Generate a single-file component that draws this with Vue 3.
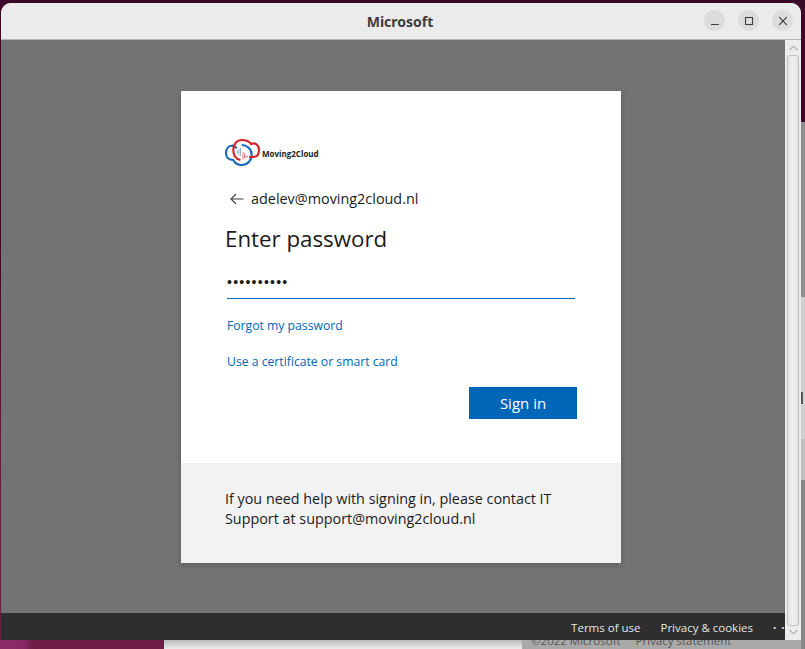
<script setup>
const footerLinks = ['Terms of use', 'Privacy & cookies']
</script>

<template>
  <div class="desktop">
    <div class="left-col">
      <div class="window">
        <header class="titlebar">
          <span class="title">Microsoft</span>
          <div class="controls">
            <button class="ctrl">
              <svg width="10" height="10" viewBox="0 0 10 10"><path d="M1 8.500h8" stroke="#3d3d3d" stroke-width="1.200" /></svg>
            </button>
            <button class="ctrl">
              <svg width="10" height="10" viewBox="0 0 10 10"><rect x="1.500" y="1.500" width="7" height="7" fill="none" stroke="#3d3d3d" stroke-width="1.100" /></svg>
            </button>
            <button class="ctrl">
              <svg width="10" height="10" viewBox="0 0 10 10"><path d="M1.200 1.200l7.600 7.600M8.800 1.200l-7.600 7.600" stroke="#3d3d3d" stroke-width="1.200" /></svg>
            </button>
          </div>
        </header>

        <div class="body">
          <main class="page">
            <div class="center">
              <section class="card">
                <div class="card-main">
                  <div class="logo">
                    <svg class="logo-mark" width="36" height="30" viewBox="0 0 36 30">
                      <path d="M11.700 11.300C10 9 8.500 8.500 6.700 8.700 3 9 1 12.500 1 16.300 1 20.500 4 23 8.300 23c1.700 3.500 4.700 5 8.400 5 5.800 0 10-4.500 10-10 0-6-4.700-10-10-10" fill="none" stroke="#1769b5" stroke-width="2.100" />
                      <path d="M15.500 23C11 22 8.300 18 8.300 13 8.300 7 12 3 16.700 3 21 3 24 4 26 7c4-2 8 1 8 6 0 4-2 7-6 7h-4" fill="none" stroke="#d3222a" stroke-width="2.100" />
                      <path d="M12.500 13.500v3M14 12v6M15.500 11v8" stroke="#7d9cc0" stroke-width=".8" />
                      <path d="M18 15v7M19.500 16.500v5M21 18v3M22.500 19v1.500" stroke="#d9605f" stroke-width=".8" />
                    </svg>
                    <span class="logo-text">Moving2Cloud</span>
                  </div>

                  <div class="identity">
                    <svg class="back" width="14" height="12" viewBox="0 0 14 12"><path d="M13.500 6H1.200M6 1L1 6l5 5" fill="none" stroke="#404040" stroke-width="1.100" /></svg>
                    <span>adelev@moving2cloud.nl</span>
                  </div>

                  <h1>Enter password</h1>

                  <div class="password">••••••••••</div>

                  <a class="link first">Forgot my password</a>
                  <a class="link second">Use a certificate or smart card</a>

                  <div class="actions">
                    <button class="signin">Sign in</button>
                  </div>
                </div>
                <div class="card-help">
                  If you need help with signing in, please contact IT<br />
                  Support at support@moving2cloud.nl
                </div>
              </section>
            </div>
            <footer class="page-footer">
              <a v-for="l in footerLinks" :key="l">{{ l }}</a>
              <span class="dots">···</span>
            </footer>
          </main>

          <aside class="scrollbar">
            <svg width="9" height="6" viewBox="0 0 9 6"><path d="M.5 5l4-4 4 4" fill="none" stroke="#8a8a8a" /></svg>
            <div class="thumb"></div>
            <svg width="9" height="6" viewBox="0 0 9 6"><path d="M.5 1l4 4 4-4" fill="none" stroke="#8a8a8a" /></svg>
          </aside>
        </div>
      </div>

      <div class="behind">
        <div class="wall"></div>
        <div class="behind-light"></div>
        <div class="behind-gray">
          <span>©2022 Microsoft</span>
          <span>Privacy statement</span>
        </div>
      </div>
    </div>

    <div class="side">
      <div class="side-a"></div>
      <div class="side-b"></div>
      <div class="side-c"><i class="side-handle"></i></div>
      <div class="side-d"></div>
      <div class="side-e"></div>
    </div>
  </div>
</template>

<style>
html, body {
  margin: 0;
  background: #3b0a2a;
  overflow: hidden;
}
</style>

<style scoped>
.desktop {
  width: 805px;
  height: 649px;
  overflow: hidden;
  display: flex;
  background: linear-gradient(#3b0a2a 0, #3b0a2a 35%, #6e1d49 80%);
  font-family: "Open Sans", "Noto Sans", sans-serif;
}

.left-col {
  width: 801px;
  flex: none;
}

.window {
  width: 800px;
  height: 637px;
  margin: 3px 0 0 1px;
  display: flex;
  flex-direction: column;
  background: #ebebeb;
  border-radius: 10px 10px 0 0;
  overflow: hidden;
}

.titlebar {
  height: 36px;
  flex: none;
  display: flex;
  align-items: center;
  justify-content: center;
  position: relative;
  padding-right: 2px;
  background: #ebebeb;
  border-bottom: 1px solid #b5b5b5;
}

.title {
  font-family: "Noto Sans", sans-serif;
  font-size: 14px;
  font-weight: 700;
  color: #3d3d3d;
}

.controls {
  position: absolute;
  right: 8px;
  top: 7px;
  display: flex;
  gap: 13px;
}

.ctrl {
  width: 21px;
  height: 21px;
  padding: 0;
  border: none;
  border-radius: 50%;
  background: #dcdcdc;
  display: flex;
  align-items: center;
  justify-content: center;
}

.body {
  flex: 1;
  display: flex;
  min-height: 0;
}

.page {
  flex: 1;
  min-width: 0;
  display: flex;
  flex-direction: column;
  background: #737373;
}

.center {
  flex: 1;
  padding: 51px 0 0 180px;
}

.card {
  width: 440px;
  height: 472px;
  display: flex;
  flex-direction: column;
  background: #fff;
  box-shadow: 0 2px 6px rgba(0, 0, 0, 0.2);
}

.card-main {
  height: 372px;
  padding: 44px 44px 0;
  box-sizing: border-box;
  color: #1b1b1b;
}

.logo {
  display: flex;
  align-items: center;
  height: 36px;
}

.logo-mark {
  margin-right: 1px;
  margin-top: -2px;
}

.logo-text {
  font-size: 8px;
  font-weight: 700;
  color: #222;
}

.identity {
  display: flex;
  align-items: center;
  margin-top: 18px;
  padding-left: 5px;
  gap: 7px;
  font-size: 14.400px;
  line-height: 20px;
}

h1 {
  margin: 14px 0 0;
  font-size: 22.300px;
  font-weight: 400;
  line-height: 32px;
}

.password {
  margin: 11px 0 0 2px;
  width: 348px;
  height: 32px;
  line-height: 32px;
  font-size: 14px;
  letter-spacing: 1.250px;
  font-family: "Liberation Sans", sans-serif;
  border-bottom: 1px solid #0067b8;
}

.link {
  display: block;
  margin-left: 2px;
  font-size: 12.200px;
  line-height: 18px;
  color: #0067b8;
}

.first {
  margin-top: 18px;
}

.second {
  margin-top: 18px;
}

.actions {
  display: flex;
  justify-content: flex-end;
  margin-top: 16px;
}

.signin {
  width: 108px;
  height: 32px;
  border: none;
  background: #0067b8;
  color: #fff;
  font-family: inherit;
  font-size: 15px;
}

.card-help {
  flex: 1;
  padding: 26px 44px 0;
  background: #f2f2f2;
  color: #1b1b1b;
  font-size: 14.350px;
  line-height: 20px;
}

.page-footer {
  height: 27px;
  flex: none;
  display: flex;
  align-items: center;
  justify-content: flex-end;
  gap: 20px;
  padding-top: 2px;
  box-sizing: border-box;
  background: #2e2e2e;
  color: #e6e6e6;
  font-size: 11.500px;
  overflow: hidden;
}

.dots {
  width: 12px;
  font-weight: 700;
  letter-spacing: 5px;
  white-space: nowrap;
  overflow: hidden;
}

.scrollbar {
  width: 16px;
  flex: none;
  display: flex;
  flex-direction: column;
  align-items: center;
  justify-content: space-between;
  padding: 5px 0;
  box-sizing: border-box;
  background: #ececec;
}

.thumb {
  flex: 1;
  width: 12px;
  margin: 4px 0 3px;
  border: 1px solid #c2c2c2;
  border-radius: 3px;
  box-sizing: border-box;
  background: linear-gradient(90deg, #e4e4e4, #f0f0f0 50%, #e4e4e4);
}

.behind {
  display: flex;
  height: 9px;
  overflow: hidden;
  font-size: 11.500px;
}

.wall {
  width: 164px;
  background: linear-gradient(90deg, #8a2a66 0, #8a2a66 22px, #6e1d49 34px);
}

.behind-light {
  width: 358px;
  background: linear-gradient(#b9b9b9, #ececec);
}

.behind-gray {
  width: 279px;
  display: flex;
  gap: 15px;
  padding-left: 9px;
  box-sizing: border-box;
  background: #a9a9a9;
  color: #555;
  line-height: 2px;
}

.side {
  flex: 1;
  display: flex;
  flex-direction: column;
}

.side-a {
  height: 122px;
  background: #3b0a2a;
}

.side-b {
  height: 175px;
  background: #8e8e8e;
}

.side-c {
  height: 142px;
  padding-top: 95px;
  box-sizing: border-box;
  background: #d0d0d0;
}

.side-handle {
  display: block;
  width: 2px;
  height: 12px;
  background: #555;
}

.side-d {
  height: 41px;
  background: #c0c0c0;
}

.side-e {
  flex: 1;
  background: #888;
}
</style>
